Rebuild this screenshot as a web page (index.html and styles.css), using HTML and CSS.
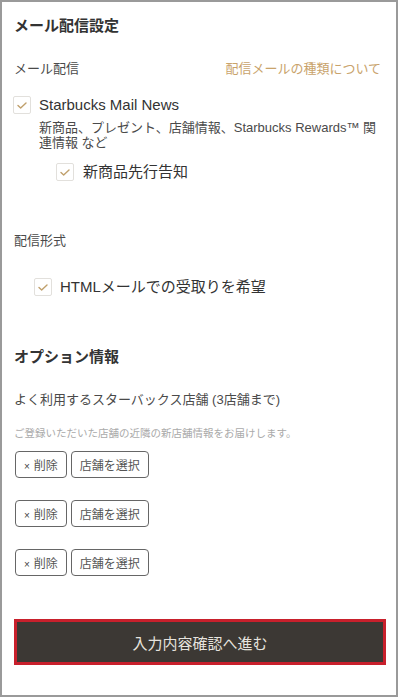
FILE: index.html
```html
<!DOCTYPE html>
<html lang="ja">

<head>
  <meta charset="UTF-8" />
  <meta name="viewport" content="width=device-width, initial-scale=1.0" />
  <title>メール配信設定</title>
  <link rel="stylesheet" href="styles.css">
</head>

<body>
  <div class="frame">
    <form class="settings">
      <h2 class="section-title">メール配信設定</h2>

      <div class="field-head">
        <span class="field-label">メール配信</span>
        <a class="field-link" href="#">配信メールの種類について</a>
      </div>

      <label class="check check-main">
        <span class="box"><svg viewBox="0 0 18 18"><polyline points="4.5,9.5 7.5,12.3 13.5,6.8" /></svg></span>
        <span class="check-text">Starbucks Mail News</span>
      </label>
      <p class="check-desc">新商品、プレゼント、店舗情報、Starbucks Rewards™ 関連情報 など</p>

      <label class="check check-sub">
        <span class="box"><svg viewBox="0 0 18 18"><polyline points="4.5,9.5 7.5,12.3 13.5,6.8" /></svg></span>
        <span class="check-text">新商品先行告知</span>
      </label>

      <div class="field-head format-head">
        <span class="field-label">配信形式</span>
      </div>

      <label class="check check-format">
        <span class="box"><svg viewBox="0 0 18 18"><polyline points="4.5,9.5 7.5,12.3 13.5,6.8" /></svg></span>
        <span class="check-text">HTMLメールでの受取りを希望</span>
      </label>

      <h2 class="section-title option-title">オプション情報</h2>

      <div class="field-head store-head">
        <span class="field-label">よく利用するスターバックス店舗 (3店舗まで)</span>
      </div>
      <p class="note">ご登録いただいた店舗の近隣の新店舗情報をお届けします。</p>

      <div class="store-list">
        <div class="store-row">
          <button type="button" class="small-btn"><span class="x">×</span>削除</button>
          <button type="button" class="small-btn">店舗を選択</button>
        </div>
        <div class="store-row">
          <button type="button" class="small-btn"><span class="x">×</span>削除</button>
          <button type="button" class="small-btn">店舗を選択</button>
        </div>
        <div class="store-row">
          <button type="button" class="small-btn"><span class="x">×</span>削除</button>
          <button type="button" class="small-btn">店舗を選択</button>
        </div>
      </div>

      <button type="submit" class="submit-btn">入力内容確認へ進む</button>
    </form>
  </div>
</body>

</html>
```

FILE: styles.css
```css
* {
  box-sizing: border-box;
  font-family: "Liberation Sans", "Noto Sans CJK JP", sans-serif;
}

body {
  margin: 0;
  background: #fff;
  color: #3a3a3a;
}

.frame {
  width: 398px;
  height: 697px;
  border: 2px solid #9a9a9a;
  overflow: hidden;
}

.settings {
  display: flex;
  flex-direction: column;
  padding: 14px 11px 0 12px;
}

/* Headings */
.section-title {
  margin: 0;
  font-size: 15px;
  line-height: 20px;
  font-weight: bold;
  color: #333;
}

.option-title {
  margin-top: 51px;
}

.field-head {
  display: flex;
  justify-content: space-between;
  align-items: center;
  margin-top: 23px;
  font-size: 13px;
  line-height: 20px;
}

.field-label {
  color: #4a4a4a;
}

.field-link {
  color: #c9a36b;
  text-decoration: none;
  margin-right: 4px;
}

.format-head {
  margin-top: 50px;
}

/* Checkboxes */
.check {
  display: flex;
  align-items: center;
  gap: 8px;
  font-size: 15px;
  line-height: 18px;
  color: #333;
}

.box {
  width: 18px;
  height: 18px;
  border: 1px solid #e2e0dc;
  border-radius: 2px;
  background: #fff;
  flex: none;
}

.box svg {
  display: block;
  width: 16px;
  height: 16px;
  fill: none;
  stroke: #c0a06c;
  stroke-width: 1.6;
  stroke-linecap: round;
  stroke-linejoin: round;
}

.check-main {
  margin: 17px 0 0 -1px;
}

.check-desc {
  margin: 6px 0 0 25px;
  font-size: 13px;
  line-height: 15px;
  color: #4a4a4a;
}

.check-sub {
  margin: 13px 0 0 42px;
}

.check-sub .check-text {
  margin-left: 1px;
}

.check-format {
  margin: 27px 0 0 20px;
}

/* Store list */
.store-head {
  margin-top: 23px;
}

.note {
  margin: 16px 0 0 0;
  font-size: 10.5px;
  line-height: 14px;
  color: #aaa;
}

.store-list {
  display: flex;
  flex-direction: column;
  gap: 22px;
  margin: 11px 0 0 1px;
}

.store-row {
  display: flex;
  gap: 4px;
}

.small-btn {
  height: 27px;
  padding: 0 8px;
  border: 1.5px solid #666;
  border-radius: 4px;
  background: #fff;
  color: #555;
  font-size: 12px;
  cursor: pointer;
}

.small-btn .x {
  font-size: 10px;
  margin-right: 4px;
  color: #444;
}

/* Submit */
.submit-btn {
  width: 372px;
  height: 46px;
  margin-top: 43px;
  border: 3px solid #c8202c;
  background: #3c3834;
  color: #e6e3df;
  font-size: 15px;
  cursor: pointer;
}
```
